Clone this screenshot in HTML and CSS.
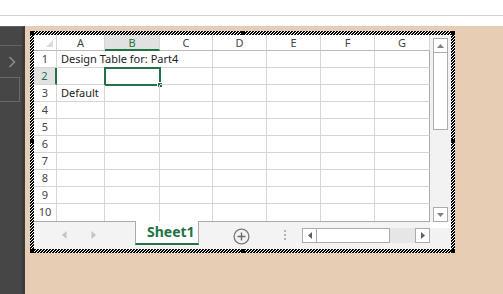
FILE: index.html
```html
<!DOCTYPE html>
<html>
<head>
<meta charset="utf-8">
<link rel="stylesheet" href="styles.css">
</head>
<body>
<div class="topbar"></div>
<div class="main">
  <div class="panel">
    <div class="panel-sep"></div>
    <svg class="panel-chev" width="22" height="12" viewBox="0 0 22 12"><polyline points="9.5,1 14.5,6 9.5,11" fill="none" stroke="#8c8c8c" stroke-width="1.6"/></svg>
    <div class="panel-box"></div>
  </div>
  <div class="canvas">
    <div class="frame">
      <div class="sheet">
        <div class="leftcol">
          <div class="grid">
            <div class="c hdr corner"><svg width="7" height="7" viewBox="0 0 7 7"><polygon points="7,0 7,7 0,7" fill="#dcdcdc"/></svg></div>
            <div class="c hdr">A</div>
            <div class="c hdr sel">B</div>
            <div class="c hdr">C</div>
            <div class="c hdr">D</div>
            <div class="c hdr">E</div>
            <div class="c hdr">F</div>
            <div class="c hdr last">G</div>

            <div class="c rh">1</div><div class="c txt noborder">Design Table for: Part4</div><div class="c noborder"></div><div class="c"></div><div class="c"></div><div class="c"></div><div class="c"></div><div class="c last"></div>
            <div class="c rh sel">2</div><div class="c"></div><div class="c active"><div class="selbox"><span class="selhandle"></span></div></div><div class="c"></div><div class="c"></div><div class="c"></div><div class="c"></div><div class="c last"></div>
            <div class="c rh">3</div><div class="c txt">Default</div><div class="c"></div><div class="c"></div><div class="c"></div><div class="c"></div><div class="c"></div><div class="c last"></div>
            <div class="c rh">4</div><div class="c"></div><div class="c"></div><div class="c"></div><div class="c"></div><div class="c"></div><div class="c"></div><div class="c last"></div>
            <div class="c rh">5</div><div class="c"></div><div class="c"></div><div class="c"></div><div class="c"></div><div class="c"></div><div class="c"></div><div class="c last"></div>
            <div class="c rh">6</div><div class="c"></div><div class="c"></div><div class="c"></div><div class="c"></div><div class="c"></div><div class="c"></div><div class="c last"></div>
            <div class="c rh">7</div><div class="c"></div><div class="c"></div><div class="c"></div><div class="c"></div><div class="c"></div><div class="c"></div><div class="c last"></div>
            <div class="c rh">8</div><div class="c"></div><div class="c"></div><div class="c"></div><div class="c"></div><div class="c"></div><div class="c"></div><div class="c last"></div>
            <div class="c rh">9</div><div class="c"></div><div class="c"></div><div class="c"></div><div class="c"></div><div class="c"></div><div class="c"></div><div class="c last"></div>
            <div class="c rh lastrow">10</div><div class="c lastrow"></div><div class="c lastrow"></div><div class="c lastrow"></div><div class="c lastrow"></div><div class="c lastrow"></div><div class="c lastrow"></div><div class="c last lastrow"></div>
          </div>
          <div class="tabbar">
            <div class="nav">
              <svg width="5" height="8" viewBox="0 0 5 8"><polygon points="4.5,0 4.5,8 0,4" fill="#c4c4c4"/></svg>
              <svg width="5" height="8" viewBox="0 0 5 8"><polygon points="0.5,0 0.5,8 5,4" fill="#c4c4c4"/></svg>
            </div>
            <div class="tab">Sheet1</div>
            <div class="plus"><svg width="17" height="17" viewBox="0 0 17 17"><circle cx="8.5" cy="8.5" r="7.4" fill="none" stroke="#7a7a7a" stroke-width="1.3"/><path d="M8.5 4.5v8M4.5 8.5h8" stroke="#6a6a6a" stroke-width="1.4"/></svg></div>
            <div class="dots"><span></span><span></span><span></span></div>
            <div class="hscroll">
              <div class="hbtn"><svg width="4" height="7" viewBox="0 0 4 7"><polygon points="4,0 4,7 0,3.5" fill="#606060"/></svg></div>
              <div class="hthumb"></div>
              <div class="htrack"></div>
              <div class="hbtn"><svg width="4" height="7" viewBox="0 0 4 7"><polygon points="0,0 0,7 4,3.5" fill="#606060"/></svg></div>
            </div>
          </div>
        </div>
        <div class="vcol">
          <div class="vbtn up"><svg width="7" height="4" viewBox="0 0 7 4"><polygon points="0,4 7,4 3.5,0" fill="#808080"/></svg></div>
          <div class="vthumb"></div>
          <div class="vtrack"></div>
          <div class="vbtn"><svg width="7" height="4" viewBox="0 0 7 4"><polygon points="0,0 7,0 3.5,4" fill="#808080"/></svg></div>
          <div class="vgap"></div>
          <div class="vrest"></div>
        </div>
      </div>
      <span class="handle h-tl"></span>
      <span class="handle h-tm"></span>
      <span class="handle h-tr"></span>
      <span class="handle h-ml"></span>
      <span class="handle h-mr"></span>
      <span class="handle h-bl"></span>
      <span class="handle h-bm"></span>
      <span class="handle h-br"></span>
    </div>
  </div>
</div>
</body>
</html>
```
FILE: styles.css
```css
* { box-sizing: border-box; }
html, body { margin: 0; padding: 0; }
body {
  width: 503px;
  height: 294px;
  overflow: hidden;
  background: #fff;
  font-family: "Noto Sans", "Open Sans", sans-serif;
}
.topbar {
  height: 26px;
  border-top: 15px solid #fff;
  border-bottom: 0;
  background: linear-gradient(#d2d2d2 0 1px, #fff 1px);
}
.main {
  display: flex;
  height: 268px;
}
.panel {
  width: 25px;
  flex: none;
  background: #464646;
  border-right: 3px solid #3b3b3b;
  border-top: 1px solid #5b6465;
}
.panel-sep {
  height: 1px;
  background: #646464;
  margin-top: 18px;
}
.panel-chev { display: block; margin-top: 10px; }
.panel-box {
  margin-top: 9px;
  width: 20px;
  height: 25px;
  border: 1px solid #6a6a6a;
  border-left: none;
}
.canvas {
  flex: 1;
  background: #e8cdb5;
  padding: 5px 0 0 5px;
}
.frame {
  position: relative;
  width: 425px;
  height: 222px;
  padding: 4px;
  background-color: #fff;
  background-image: url("data:image/svg+xml,%3Csvg xmlns='http://www.w3.org/2000/svg' width='3' height='3' shape-rendering='crispEdges'%3E%3Crect width='3' height='3' fill='%23fff'/%3E%3Cpath d='M0 0h2v1H0zM0 1h1v1H0zM2 1h1v1H2zM1 2h2v1H1z' fill='%23000'/%3E%3C/svg%3E");
  background-size: 3px 3px;
}
.sheet {
  display: flex;
  width: 417px;
  height: 214px;
  background: #fff;
}
.leftcol {
  width: 396px;
  display: flex;
  flex-direction: column;
}
.grid {
  display: grid;
  grid-template-columns: 23px 48px 55px 53px 54px 54px 54px 55px;
  grid-template-rows: 16px repeat(10, 17px);
  height: 186px;
  font-size: 11px;
  color: #444;
}
.c {
  border-right: 1px solid #d6d6d6;
  border-bottom: 1px solid #d6d6d6;
  line-height: 16px;
  white-space: nowrap;
  position: relative;
}
.c.last { border-right-color: #ababab; }
.c.lastrow { border-bottom: none; }
.hdr {
  text-align: center;
  border-bottom-color: #b8b8b8;
  line-height: 15px;
  color: #444;
}
.hdr.last { border-right-color: #d6d6d6; }
.corner {
  display: flex;
  align-items: flex-end;
  justify-content: flex-end;
  padding: 0 3px 3px 0;
}
.corner svg { display: block; }
.hdr.sel {
  background: #e1e1e1;
  color: #217346;
  border-bottom: 2px solid #217346;
}
.rh {
  text-align: center;
  color: #444;
}
.rh.sel {
  background: #e1e1e1;
  color: #217346;
  border-right: 2px solid #217346;
}
.txt {
  padding-left: 4px;
  color: #222;
}
.noborder { border-right-color: transparent; }
.selbox {
  position: absolute;
  left: -1px;
  top: -1px;
  width: 57px;
  height: 19px;
  border: 2px solid #217346;
}
.selhandle {
  position: absolute;
  right: -4px;
  bottom: -4px;
  width: 6px;
  height: 6px;
  background: #217346;
  border: 1px solid #fff;
}
.tabbar {
  height: 28px;
  border-top: 1px solid #ababab;
  background: #f3f3f3;
  display: flex;
  align-items: flex-start;
}
.nav {
  width: 101px;
  height: 27px;
  display: flex;
  align-items: center;
  padding-left: 28px;
  gap: 24px;
}
.nav svg { display: block; margin-top: -1px; }
.tab {
  width: 64px;
  height: 24px;
  margin-top: -1px;
  background: #fff;
  border-left: 1px solid #ababab;
  border-right: 1px solid #ababab;
  border-bottom: 2px solid #217346;
  color: #217346;
  font-weight: 700;
  font-size: 14px;
  line-height: 22px;
  padding-left: 11px;
  white-space: nowrap;
}
.plus {
  width: 84px;
  height: 27px;
  display: flex;
  align-items: center;
  justify-content: center;
}
.plus svg { display: block; margin-top: 1px; }
.dots {
  width: 4px;
  height: 27px;
  display: flex;
  flex-direction: column;
  align-items: center;
  padding-top: 8px;
  gap: 2px;
}
.dots span {
  width: 2px;
  height: 2px;
  background: #b4b4b4;
}
.hscroll {
  margin-left: 15px;
  margin-top: 6px;
  width: 128px;
  height: 15px;
  display: flex;
}
.hbtn {
  width: 15px;
  height: 15px;
  background: #fff;
  border: 1px solid #ababab;
  display: flex;
  align-items: center;
  justify-content: center;
}
.hbtn svg { display: block; }
.hthumb {
  width: 73px;
  background: #fff;
  border: 1px solid #ababab;
  border-left: none;
}
.htrack {
  flex: 1;
  background: #e6e6e6;
}
.vcol {
  width: 21px;
  background: #f2f2f2;
  padding-left: 3px;
  padding-top: 3px;
  display: flex;
  flex-direction: column;
}
.vcol > div { width: 15px; }
.vbtn {
  height: 15px;
  background: #fff;
  border: 1px solid #ababab;
  display: flex;
  align-items: center;
  justify-content: center;
}
.vbtn svg { display: block; }
.vthumb {
  height: 77px;
  background: #fff;
  border: 1px solid #ababab;
  border-top: none;
}
.vtrack { flex: 1; }
.vgap {
  height: 6px;
  background: #fff;
  margin-left: -3px;
  width: 21px !important;
}
.vrest { height: 21px; }
.handle {
  position: absolute;
  width: 4px;
  height: 4px;
  background: #000;
}
.h-tl { left: 0; top: 0; }
.h-tm { left: 211px; top: 0; }
.h-tr { left: 421px; top: 0; }
.h-ml { left: 0; top: 108px; }
.h-mr { left: 421px; top: 108px; }
.h-bl { left: 0; top: 218px; }
.h-bm { left: 211px; top: 218px; }
.h-br { left: 421px; top: 218px; }
```
